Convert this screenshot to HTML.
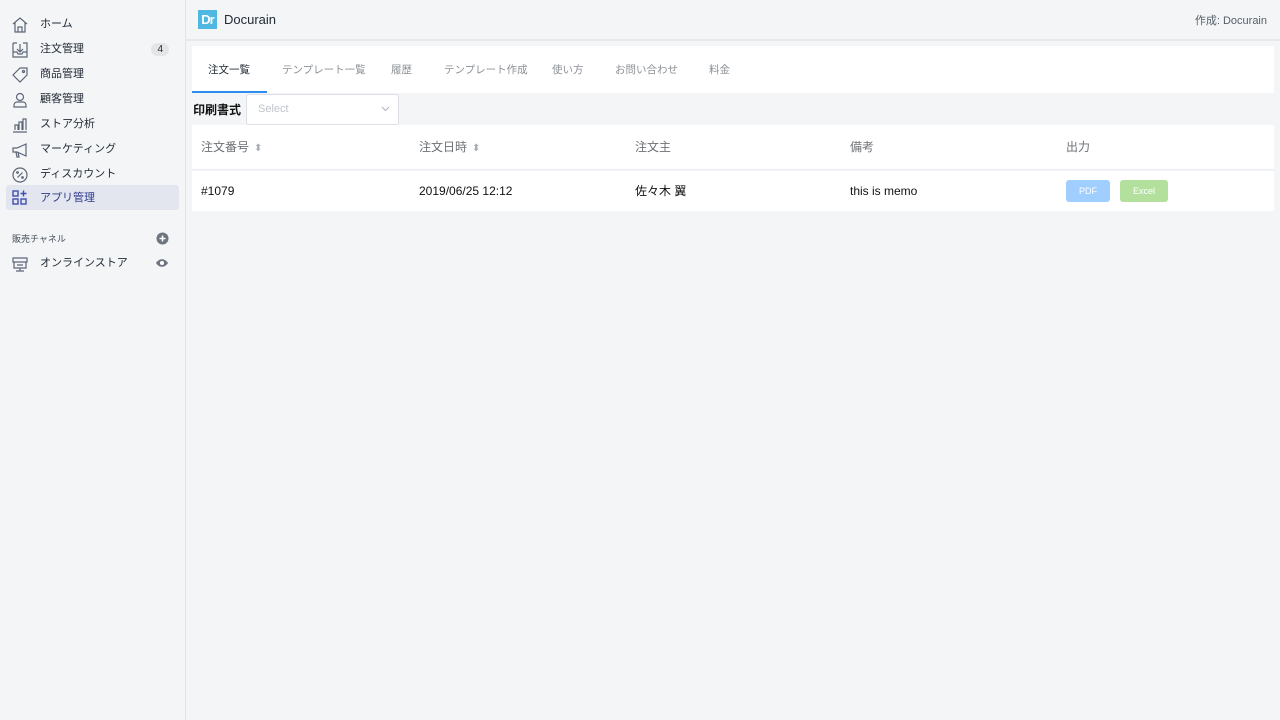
<!DOCTYPE html>
<html><head><meta charset="utf-8"><style>
*{box-sizing:border-box;margin:0;padding:0}
body{width:1280px;height:720px;background:#f4f5f7;font-family:"Liberation Sans","Noto Sans CJK JP",sans-serif;position:relative;overflow:hidden;color:#212b36}
.side{position:absolute;left:0;top:0;width:186px;height:720px;background:#f4f5f7;border-right:1px solid #e1e3e5}
.it{position:absolute;left:6px;width:173px;height:25px;font-size:11px;line-height:25px;padding-left:34px;color:#212b36;border-radius:3px}
.it svg{position:absolute;left:5px;top:4px}
.act{background:#e3e6ef;color:#2e3a8c}
.badge{position:absolute;right:10px;top:6px;background:#e4e5e7;border-radius:8px;font-size:10px;line-height:13px;padding:0 6px}
.hdr{position:absolute;left:186px;top:0;right:0;height:41px;border-bottom:2px solid #e8e9eb}
.card{position:absolute;background:#fff}
.tab{position:absolute;top:1px;font-size:10.5px;line-height:47px;color:#8c9196}
.th{position:absolute;top:0;line-height:44px;font-size:12px;color:#6d7175}
.td{position:absolute;top:0;line-height:40px;font-size:12px;color:#111}
.sort{display:inline-block;font-size:10px;color:#a8adb3;margin-left:5px;vertical-align:0}
</style></head><body>
<div class="side">
<div class="it" style="top:12px"><svg width="18" height="18" viewBox="0 0 18 18" fill="none" stroke="#5c6677" stroke-width="1.2"><path d="M2 8L9 2l7 6M4 7v9h10V7M7 16v-5h4v5"/></svg>ホーム</div>
<div class="it" style="top:37px"><svg width="18" height="18" viewBox="0 0 18 18" fill="none" stroke="#5c6677" stroke-width="1.2"><path d="M2 2h4M12 2h4v14H2V2M9 3v7M6 8l3 3 3-3M2 11h4l1 2h4l1-2h4"/></svg>注文管理<span class="badge">4</span></div>
<div class="it" style="top:62px"><svg width="18" height="18" viewBox="0 0 18 18" fill="none" stroke="#5c6677" stroke-width="1.2"><path d="M2 9l7-7h7v7l-7 7z"/><circle cx="12.5" cy="5.5" r="1"/></svg>商品管理</div>
<div class="it" style="top:87px"><svg width="18" height="18" viewBox="0 0 18 18" fill="none" stroke="#5c6677" stroke-width="1.2"><circle cx="9" cy="6" r="3.5"/><path d="M3 16v-2a3 3 0 013-3h6a3 3 0 013 3v2z"/></svg>顧客管理</div>
<div class="it" style="top:112px"><svg width="18" height="18" viewBox="0 0 18 18" fill="none" stroke="#5c6677" stroke-width="1.2"><path d="M2 16h14M4 14V9h3v5M8 14V6h3v8M12 14V3h3v11"/></svg>ストア分析</div>
<div class="it" style="top:137px"><svg width="18" height="18" viewBox="0 0 18 18" fill="none" stroke="#5c6677" stroke-width="1.2"><path d="M2 7h4l9-4v12l-9-4H2zM5 11l1 5h2l-1-5"/></svg>マーケティング</div>
<div class="it" style="top:162px"><svg width="18" height="18" viewBox="0 0 18 18" fill="none" stroke="#5c6677" stroke-width="1.2"><circle cx="9" cy="9" r="7"/><path d="M6.5 11.5l5-5"/><circle cx="6.5" cy="6.5" r=".8"/><circle cx="11.5" cy="11.5" r=".8"/></svg>ディスカウント</div>
<div class="it act" style="top:185px;line-height:26px"><svg width="18" height="18" viewBox="0 0 18 18" fill="none" stroke="#3f4eae" stroke-width="1.4"><rect x="2" y="2" width="5" height="5"/><rect x="2" y="10" width="5" height="5"/><rect x="10" y="10" width="5" height="5"/><path d="M12.5 1.5v6M9.5 4.5h6"/></svg>アプリ管理</div>
<div style="position:absolute;left:12px;top:232px;font-size:9px;color:#454f5b">販売チャネル</div>
<svg style="position:absolute;left:156px;top:232px" width="13" height="13" viewBox="0 0 13 13"><circle cx="6.5" cy="6.5" r="6" fill="#6d7580"/><path d="M6.5 3.5v6M3.5 6.5h6" stroke="#fff" stroke-width="1.5"/></svg>
<div class="it" style="top:251px"><svg width="18" height="18" viewBox="0 0 18 18" fill="none" stroke="#5c6677" stroke-width="1.2"><path d="M2 3h14v4H2zM3 7v6h12V7M5 16h8M9 13v3M6 10h6"/></svg>オンラインストア</div>
<svg style="position:absolute;left:155px;top:258px" width="14" height="10" viewBox="0 0 14 10"><path d="M1 5c3-5 9-5 12 0-3 5-9 5-12 0z" fill="#6d7580"/><circle cx="7" cy="5" r="2" fill="#fff"/></svg>
</div>
<div class="hdr">
<div style="position:absolute;left:12px;top:10px;width:19px;height:19px;background:#4fb8e0;color:#fff;font-weight:bold;font-size:13px;line-height:19px;text-align:center;letter-spacing:-1px">Dr</div>
<div style="position:absolute;left:38px;top:12px;font-size:13px;color:#212b36">Docurain</div>
<div style="position:absolute;right:13px;top:12px;font-size:11px;color:#555f6b">作成: Docurain</div>
</div>
<div class="card" style="left:192px;top:46px;width:1082px;height:47px">
<div class="tab" style="left:16px;color:#212b36">注文一覧</div>
<div style="position:absolute;left:0;top:45px;width:75px;height:2px;background:#2c8ff0"></div>
<div class="tab" style="left:90px">テンプレート一覧</div>
<div class="tab" style="left:199px">履歴</div>
<div class="tab" style="left:252px">テンプレート作成</div>
<div class="tab" style="left:360px">使い方</div>
<div class="tab" style="left:423px">お問い合わせ</div>
<div class="tab" style="left:517px">料金</div>
</div>
<div style="position:absolute;left:193px;top:101px;font-size:12px;font-weight:bold;color:#111">印刷書式</div>
<div style="position:absolute;left:246px;top:94px;width:153px;height:31px;background:#fff;border:1px solid #dcdfe6;border-radius:3px">
<span style="position:absolute;left:11px;top:8px;font-size:11px;color:#c0c4cc">Select</span>
<svg style="position:absolute;left:134px;top:11px" width="9" height="6" viewBox="0 0 9 6"><path d="M1 1l3.5 3.5L8 1" fill="none" stroke="#b0b4ba"/></svg>
</div>
<div class="card" style="left:192px;top:125px;width:1082px;height:45px;border-bottom:1px solid #ebeef5">
<div class="th" style="left:9px">注文番号<span class="sort">⬍</span></div>
<div class="th" style="left:227px">注文日時<span class="sort">⬍</span></div>
<div class="th" style="left:443px">注文主</div>
<div class="th" style="left:658px">備考</div>
<div class="th" style="left:874px">出力</div>
</div>
<div class="card" style="left:192px;top:171px;width:1082px;height:40px">
<div class="td" style="left:9px">#1079</div>
<div class="td" style="left:227px">2019/06/25 12:12</div>
<div class="td" style="left:443px">佐々木 翼</div>
<div class="td" style="left:658px">this is memo</div>
<div style="position:absolute;left:874px;top:9px;width:44px;height:22px;background:#a0cfff;border-radius:3px;color:#fff;font-size:9px;line-height:22px;text-align:center">PDF</div>
<div style="position:absolute;left:928px;top:9px;width:48px;height:22px;background:#b3e19d;border-radius:3px;color:#fff;font-size:9px;line-height:22px;text-align:center">Excel</div>
</div>
</body></html>
